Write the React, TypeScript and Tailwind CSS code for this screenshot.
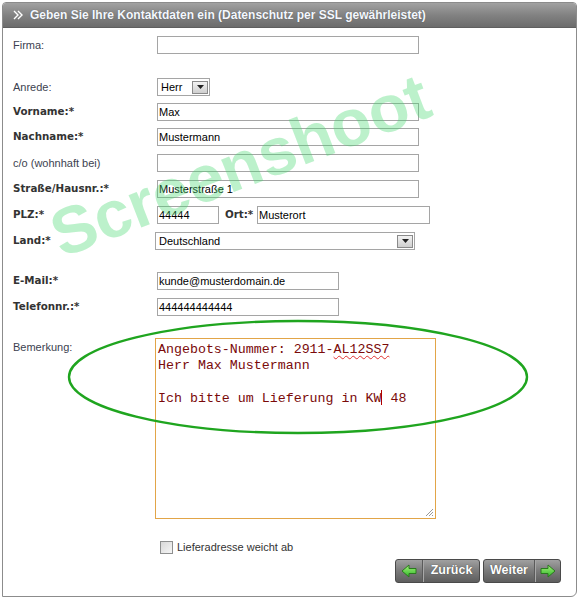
import React from 'react';

const font = "font-['Liberation_Sans',Arial,sans-serif]";
const boldLabel = "font-['DejaVu_Sans',Verdana,sans-serif] font-bold text-[10.3px] text-[#333]";

const Label = ({ children, bold }: { children: React.ReactNode; bold?: boolean }) => (
  <div className={`w-[144px] shrink-0 ${bold ? boldLabel : 'text-[11px] text-[#3c3f50]'}`}>
    {children}
  </div>
);

const Input = ({ value, w }: { value?: string; w: string }) => (
  <div className={`${w} h-[18px] border border-[#a5a5a5] bg-white px-[1px] text-[11px] leading-[16px] text-black`}>
    {value}
  </div>
);

const SelectBtn = () => (
  <div className="w-[16px] h-[13px] border border-[#8a8a8a] bg-gradient-to-b from-[#f2f2f2] to-[#cfcfcf] flex items-center justify-center">
    <svg width="7" height="4" viewBox="0 0 7 4">
      <polygon points="0,0 7,0 3.5,4" fill="#222" />
    </svg>
  </div>
);

const Arrow = ({ dir }: { dir: 'left' | 'right' }) => (
  <svg width="16" height="14" viewBox="0 0 16 14" className={dir === 'right' ? '' : '-scale-x-100'}>
    <defs>
      <linearGradient id={`g-${dir}`} x1="0" y1="0" x2="0" y2="1">
        <stop offset="0" stopColor="#a6f27a" />
        <stop offset="1" stopColor="#2fb82a" />
      </linearGradient>
    </defs>
    <polygon
      points="1,4.5 8,4.5 8,1 15,7 8,13 8,9.5 1,9.5"
      fill={`url(#g-${dir})`}
      stroke="#2a7a1e"
      strokeWidth="1"
      strokeLinejoin="round"
    />
  </svg>
);

const Row = ({ children, className = '' }: { children: React.ReactNode; className?: string }) => (
  <div className={`flex items-center ${className}`}>{children}</div>
);

export default function App() {
  return (
    <div className={`relative w-[579px] h-[599px] bg-white overflow-hidden ${font}`}>
      <div className="absolute left-[2px] top-[2px] w-[575px] h-[595px] border border-[#8c8c8c] rounded-t-[4px] rounded-br-[6px] flex flex-col">
        <div className="h-[25px] rounded-t-[3px] bg-gradient-to-b from-[#a2a2a2] via-[#828282] to-[#6c6c6c] border-b border-[#5f5f5f] flex items-center pl-[10px] gap-[6px]">
          <svg width="11" height="10" viewBox="0 0 11 10">
            <polyline points="1,1 5,5 1,9" fill="none" stroke="#fff" strokeWidth="1.4" />
            <polyline points="5,1 9,5 5,9" fill="none" stroke="#fff" strokeWidth="1.4" />
          </svg>
          <span className="text-[12px] font-bold text-[#f4f8ff] [text-shadow:0_0_1px_#555]">
            Geben Sie Ihre Kontaktdaten ein (Datenschutz per SSL gewährleistet)
          </span>
        </div>

        <div className="flex flex-col pl-[10px] pt-[8px]">
          <Row>
            <Label>Firma:</Label>
            <Input w="w-[262px]" />
          </Row>
          <Row className="mt-[24px]">
            <Label>Anrede:</Label>
            <div className="w-[53px] h-[18px] border border-[#a5a5a5] bg-white flex items-center justify-between pl-[3px] pr-[1px] text-[11px]">
              <span>Herr</span>
              <SelectBtn />
            </div>
          </Row>
          <Row className="mt-[7px]">
            <Label bold>Vorname:*</Label>
            <Input w="w-[262px]" value="Max" />
          </Row>
          <Row className="mt-[7px]">
            <Label bold>Nachname:*</Label>
            <Input w="w-[262px]" value="Mustermann" />
          </Row>
          <Row className="mt-[8px]">
            <Label>c/o (wohnhaft bei)</Label>
            <Input w="w-[262px]" />
          </Row>
          <Row className="mt-[8px]">
            <Label bold>Straße/Hausnr.:*</Label>
            <Input w="w-[262px]" value="Musterstraße 1" />
          </Row>
          <Row className="mt-[8px]">
            <Label bold>PLZ:*</Label>
            <Input w="w-[62px]" value="44444" />
            <span className={`ml-[6px] w-[32px] ${boldLabel}`}>Ort:*</span>
            <Input w="w-[173px]" value="Musterort" />
          </Row>
          <Row className="mt-[8px]">
            <div className={`w-[142px] shrink-0 ${boldLabel}`}>Land:*</div>
            <div className="w-[260px] h-[18px] border border-[#a5a5a5] bg-white flex items-center justify-between pl-[3px] pr-[1px] text-[11px]">
              <span>Deutschland</span>
              <SelectBtn />
            </div>
          </Row>
          <Row className="mt-[22px]">
            <Label bold>E-Mail:*</Label>
            <Input w="w-[182px]" value="kunde@musterdomain.de" />
          </Row>
          <Row className="mt-[8px]">
            <Label bold>Telefonnr.:*</Label>
            <Input w="w-[182px]" value="444444444444" />
          </Row>
          <div className="flex mt-[22px]">
            <div className="w-[142px] shrink-0 text-[11px] text-[#3c3f50] pt-[1px]">Bemerkung:</div>
            <div className="relative w-[281px] h-[181px] border border-[#e2a548] bg-white px-[2px] pt-[3px] font-['Liberation_Mono','Courier_New',monospace] text-[13.3px] leading-[16px] text-[#7a0a0a]">
              <div>
                Angebots-Nummer: 2911-<span className="underline decoration-wavy decoration-[#e03030] decoration-1 underline-offset-2">AL12SS7</span>
              </div>
              <div>Herr Max Mustermann</div>
              <div>&nbsp;</div>
              <div>
                Ich bitte um Lieferung in KW<span className="inline-block w-0 h-[15px] border-l border-[#b00000] align-[-3px]"></span> 48
              </div>
              <svg className="absolute right-[1px] bottom-[1px]" width="10" height="10" viewBox="0 0 10 10">
                <line x1="9" y1="2" x2="2" y2="9" stroke="#999" strokeWidth="1" />
                <line x1="9" y1="5" x2="5" y2="9" stroke="#999" strokeWidth="1" />
                <line x1="9" y1="8" x2="8" y2="9" stroke="#999" strokeWidth="1" />
              </svg>
            </div>
          </div>
          <div className="flex items-center mt-[20px] ml-[147px] gap-[4px]">
            <div className="w-[13px] h-[13px] border border-[#8e8f8f] bg-gradient-to-br from-[#d8d8d8] to-[#f6f6f6]" />
            <span className="text-[11px] text-[#333]">Lieferadresse weicht ab</span>
          </div>
          <div className="flex justify-end gap-[3px] mt-[3px] pr-[15px]">
            <div className="h-[24px] w-[85px] rounded-[3px] border border-[#4a4a4a] bg-gradient-to-b from-[#a0a0a0] via-[#7a7a7a] to-[#5e5e5e] flex items-center">
              <div className="w-[27px] h-full flex items-center justify-center border-r border-[#5a5a5a]">
                <Arrow dir="left" />
              </div>
              <div className="flex-1 h-full flex items-center justify-center border-l border-[#a8a8a8] text-[12.5px] font-bold text-white [text-shadow:0_0_1px_#333]">
                Zurück
              </div>
            </div>
            <div className="h-[24px] w-[78px] rounded-[3px] border border-[#4a4a4a] bg-gradient-to-b from-[#a0a0a0] via-[#7a7a7a] to-[#5e5e5e] flex items-center">
              <div className="flex-1 h-full flex items-center justify-center border-r border-[#5a5a5a] text-[12.5px] font-bold text-white [text-shadow:0_0_1px_#333]">
                Weiter
              </div>
              <div className="w-[25px] h-full flex items-center justify-center border-l border-[#a8a8a8]">
                <Arrow dir="right" />
              </div>
            </div>
          </div>
        </div>
      </div>

      <div className="pointer-events-none absolute left-[40px] top-[128px] w-[400px] text-center leading-[74px] text-[66px] font-bold text-[rgba(70,215,110,0.36)] rotate-[-21deg]">
        Screenshoot
      </div>

      <svg className="pointer-events-none absolute left-0 top-0" width="579" height="599">
        <ellipse cx="298" cy="377" rx="229" ry="56" fill="none" stroke="#1fa51f" strokeWidth="2.4" />
      </svg>
    </div>
  );
}
